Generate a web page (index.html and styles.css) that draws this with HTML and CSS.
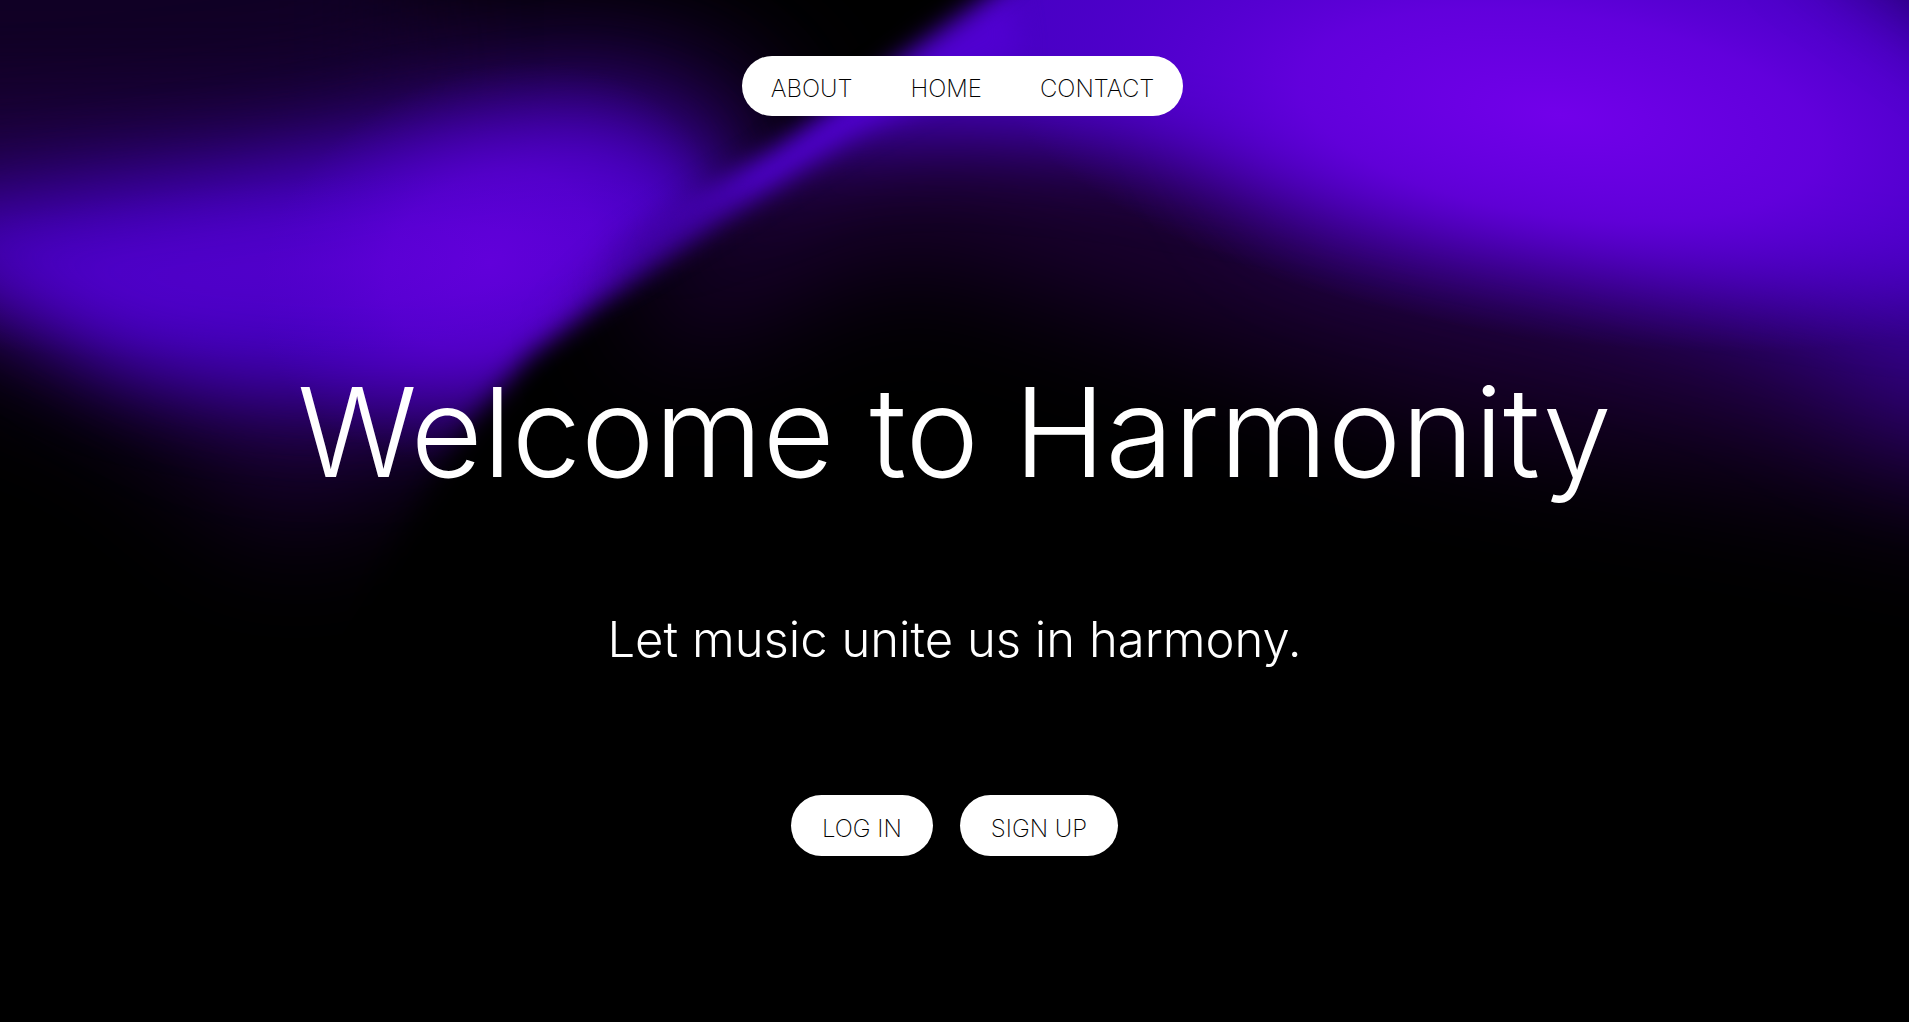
FILE: index.html
```html
<!DOCTYPE html>
<html lang="en">
<head>
<meta charset="utf-8">
<meta name="viewport" content="width=device-width, initial-scale=1">
<title>Harmonity</title>
<link rel="stylesheet" href="styles.css">
</head>
<body>
<svg class="backdrop" viewBox="0 0 1909 1022" preserveAspectRatio="none" aria-hidden="true">
  <defs>
    <filter id="soft-s" filterUnits="userSpaceOnUse" x="-400" y="-400" width="2800" height="1900" color-interpolation-filters="sRGB"><feGaussianBlur stdDeviation="13"/></filter>
    <filter id="soft-m" filterUnits="userSpaceOnUse" x="-400" y="-400" width="2800" height="1900" color-interpolation-filters="sRGB"><feGaussianBlur stdDeviation="40"/></filter>
    <filter id="soft-l" filterUnits="userSpaceOnUse" x="-400" y="-400" width="2800" height="1900" color-interpolation-filters="sRGB"><feGaussianBlur stdDeviation="60"/></filter>
    <mask id="left-side" maskUnits="userSpaceOnUse" x="0" y="0" width="1909" height="1022">
      <path d="M-200-200H1230L990 0L810 146L690 240L600 304L530 356L465 430L390 560L300 700L-200 700Z" fill="#fff" filter="url(#soft-s)"/>
    </mask>
    <mask id="right-side" maskUnits="userSpaceOnUse" x="0" y="0" width="1909" height="1022">
      <path d="M1200-160L970 8L770 150L620 236L500 330L400 480L500 900H2100V-160Z" fill="#fff" filter="url(#soft-s)"/>
    </mask>
    <radialGradient id="core"><stop offset="0" stop-color="#7200ea"/><stop offset=".45" stop-color="#6a00e4" stop-opacity=".75"/><stop offset="1" stop-color="#5000d0" stop-opacity="0"/></radialGradient>
    <linearGradient id="ridge" gradientUnits="userSpaceOnUse" x1="590" y1="300" x2="760" y2="170"><stop offset="0" stop-color="#4a00c6" stop-opacity="0"/><stop offset="1" stop-color="#5000d0"/></linearGradient>
  </defs>
  <rect width="1909" height="1022" fill="#000"/>
  <g mask="url(#left-side)">
    <path d="M-300 0L300 0L700 50L800 130L660 300L360 500L280 530L120 400L-300 240Z" fill="#1b0034" filter="url(#soft-l)"/>
    <rect x="-300" y="-300" width="700" height="400" fill="#110026" filter="url(#soft-l)"/>
    <path d="M-300 200L0 160L250 130L450 95L620 60L740 120L700 280L480 400L240 400L120 350L0 250L-300 150Z" fill="#2c0080" opacity=".55" filter="url(#soft-l)"/>
    <path d="M-300 225L0 202L250 168L450 132L600 115L700 150L740 230L640 340L500 392L380 396L240 390L120 368L0 304L-200 200Z" fill="#4600c0" filter="url(#soft-m)"/>
    <ellipse cx="490" cy="262" rx="240" ry="190" transform="rotate(-25 490 262)" fill="url(#core)" opacity=".55"/>
    <ellipse cx="330" cy="266" rx="500" ry="90" transform="rotate(-3 330 266)" fill="url(#core)" opacity=".25"/>
  </g>
  <g mask="url(#right-side)">
    <path d="M640 260L1000-100H2100V540L1800 480L1450 420L1150 325L900 245L660 360Z" fill="#1a0030" filter="url(#soft-l)"/>
    <path d="M1200 60H2300V440L1909 425L1780 345L1560 270L1300 215Z" fill="#3a00a0" opacity=".85" filter="url(#soft-l)"/>
    <path d="M640 260L790 130L1000-100H1850L2100 60V290L1909 285L1700 255L1540 222L1350 185L1120 148L940 134L820 146L720 195L640 260Z" fill="#4800c4" filter="url(#soft-m)"/>
    <ellipse cx="1560" cy="115" rx="580" ry="225" transform="rotate(8 1560 115)" fill="url(#core)"/>
    <path d="M590 262L700 182L800 112L960 0L1010-10L1020 56L860 132L720 222L590 310Z" fill="url(#ridge)" filter="url(#soft-s)"/>
    <path d="M1780-80L2050-80V110Z" fill="#180050" opacity=".7" filter="url(#soft-m)"/>
  </g>
</svg>

<header class="site-header">
  <nav class="nav" aria-label="Main">
    <a class="nav-link" href="#about">ABOUT</a>
    <a class="nav-link" href="#home">HOME</a>
    <a class="nav-link" href="#contact">CONTACT</a>
  </nav>
</header>

<main class="hero">
  <h1 class="title">Welcome to Harmonity</h1>
  <p class="tagline">Let music unite us in harmony.</p>
  <div class="actions">
    <button class="pill" type="button">LOG IN</button>
    <button class="pill" type="button">SIGN UP</button>
  </div>
</main>
</body>
</html>
```
FILE: styles.css
```css
* {
  box-sizing: border-box;
}

body {
  position: relative;
  min-height: 100vh;
  margin: 0;
  background: #000;
  color: #fff;
  font-family: Inter, "Open Sans", sans-serif;
  font-weight: 300;
}

.backdrop {
  position: absolute;
  inset: 0;
  z-index: -1;
  width: 100%;
  height: 100%;
}

.site-header {
  display: flex;
  justify-content: center;
  padding: 56px 0 0 16px;
}

.nav {
  display: flex;
  border-radius: 30px;
  background: #fff;
}

.nav-link {
  padding: 18px 29px 12px;
  color: #000;
  font-size: 24px;
  font-weight: 200;
  line-height: 30px;
  text-decoration: none;
}

.hero {
  display: flex;
  flex-direction: column;
  align-items: center;
  padding: 236px 24px 80px;
  text-align: center;
}

.title {
  margin: 0;
  font-size: 124px;
  font-weight: 300;
  line-height: 160px;
}

.tagline {
  margin: 96px 0 0;
  font-size: 49px;
  line-height: 64px;
}

.actions {
  display: flex;
  flex-wrap: wrap;
  justify-content: center;
  gap: 27px;
  margin-top: 123px;
}

.pill {
  padding: 19px 31px 12px;
  border: 0;
  border-radius: 31px;
  background: #fff;
  color: #000;
  font: 200 24px/30px Inter, "Open Sans", sans-serif;
}
```
